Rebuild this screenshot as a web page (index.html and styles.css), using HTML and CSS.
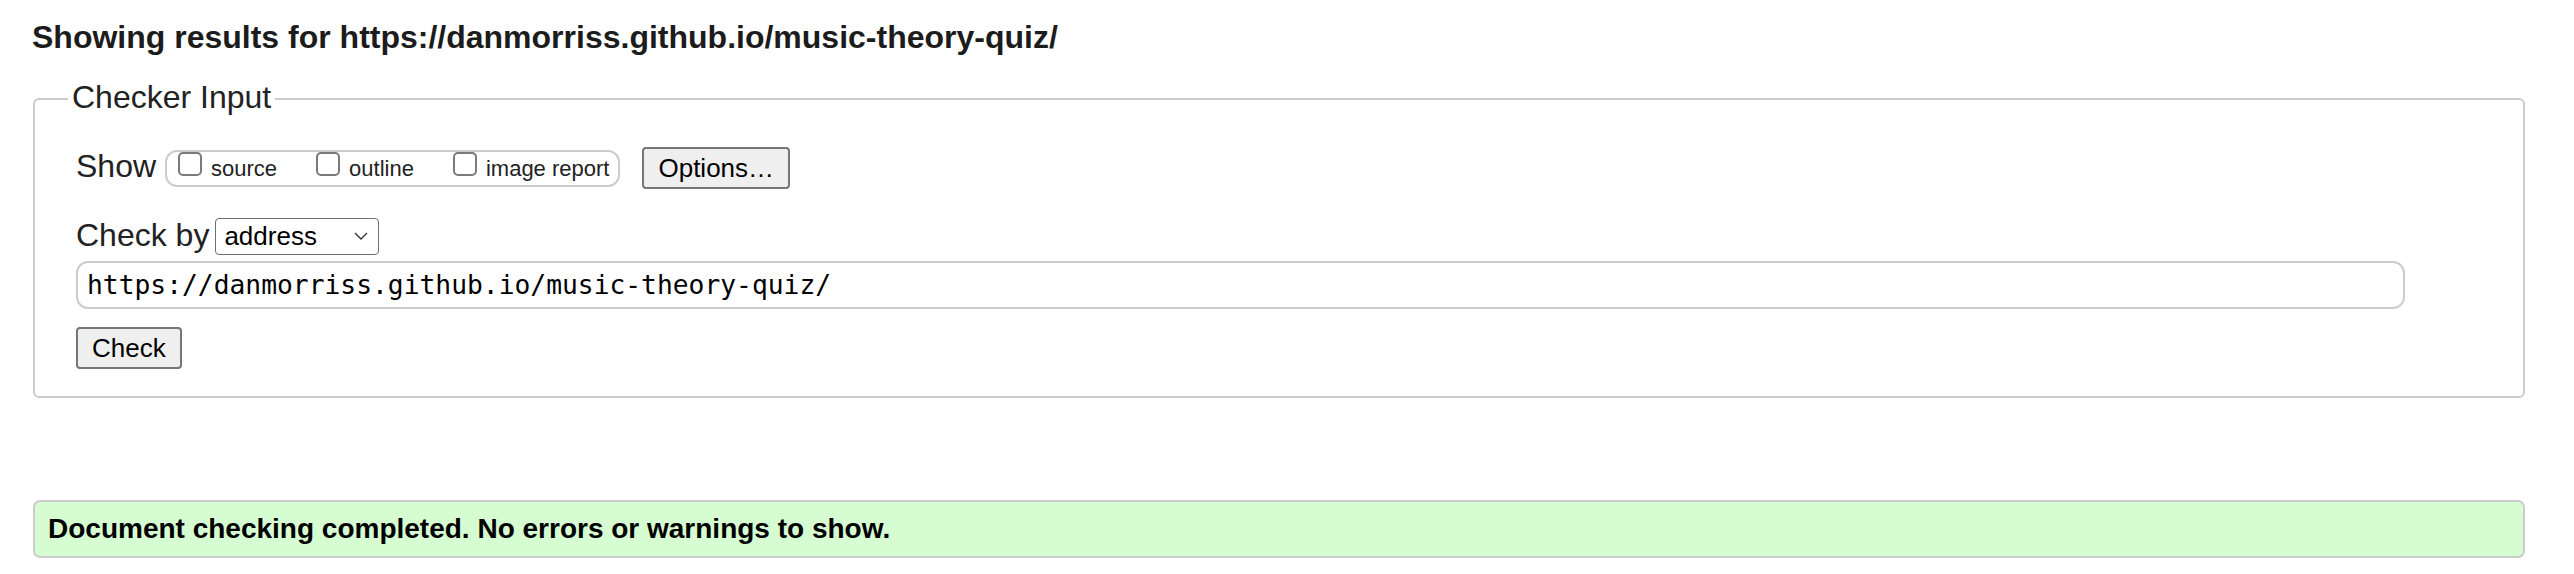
FILE: index.html
```html
<!DOCTYPE html>
<html lang="en">
<head>
<meta charset="utf-8">
<title>Showing results for https://danmorriss.github.io/music-theory-quiz/</title>
<link rel="stylesheet" href="styles.css">
</head>
<body>
<div class="page">
  <h2 class="title">Showing results for https://danmorriss.github.io/music-theory-quiz/</h2>
  <fieldset class="checker">
    <legend class="checker-legend">Checker Input</legend>
    <div class="checker-body">
      <div class="row row-show">
        <span class="row-label">Show</span>
        <span class="show-options">
          <label class="opt"><input type="checkbox" class="cb"><span class="opt-text">source</span></label>
          <label class="opt"><input type="checkbox" class="cb"><span class="opt-text">outline</span></label>
          <label class="opt"><input type="checkbox" class="cb"><span class="opt-text">image report</span></label>
        </span>
        <button type="button" class="btn btn-options">Options…</button>
      </div>
      <div class="row row-checkby">
        <span class="row-label">Check by</span>
        <span class="select-wrap">
          <select class="select"><option>address</option></select>
          <svg class="chevron" width="14" height="8" viewBox="0 0 14 8" aria-hidden="true"><polyline points="1,1 7,7 13,1" fill="none" stroke="#333" stroke-width="1.4"/></svg>
        </span>
      </div>
      <input class="url" type="text" value="https://danmorriss.github.io/music-theory-quiz/">
      <button type="button" class="btn btn-check">Check</button>
    </div>
  </fieldset>
  <div class="result">Document checking completed. No errors or warnings to show.</div>
</div>
</body>
</html>
```
FILE: styles.css
```css
html, body {
  margin: 0;
  padding: 0;
  background: #fff;
}

.page {
  padding: 0 49px 0 32px;
  font-family: "Liberation Sans", Arial, sans-serif;
  color: #222;
}

.title {
  margin: 17px 0 0 0;
  font-size: 32px;
  line-height: 40px;
  font-weight: bold;
  color: #1c1c1c;
}

.checker {
  margin: 22px 0 0 1px;
  padding: 29px 33px 27px 33px;
  border: 2px solid #cccccc;
  border-radius: 6px;
  min-width: 0;
}

.checker-legend {
  padding: 0 4px 3px 4px;
  font-size: 32px;
  line-height: 36px;
  color: #222;
}

.checker-body {
  padding-left: 8px;
}

.row {
  display: flex;
  align-items: center;
}

.row-show {
  gap: 9px;
}

.row-checkby {
  margin-top: 29px;
  gap: 6px;
}

.row-label {
  font-size: 32px;
  line-height: 32px;
  padding-bottom: 4px;
  color: #222;
}

.show-options {
  display: inline-flex;
  align-items: flex-start;
  box-sizing: border-box;
  height: 37px;
  border: 2px solid #cccccc;
  border-radius: 12px;
  padding: 0 9px 0 11px;
}

.opt {
  display: flex;
  align-items: flex-start;
}

.opt + .opt {
  margin-left: 39px;
}

.cb {
  appearance: none;
  -webkit-appearance: none;
  box-sizing: border-box;
  width: 24px;
  height: 24px;
  margin: 0 9px 0 0;
  border: 2px solid #7a7a7a;
  border-radius: 5px;
  background: #fff;
}

.opt-text {
  font-size: 22px;
  line-height: 32px;
  padding-top: 1px;
  color: #222;
}

.btn {
  box-sizing: border-box;
  height: 42px;
  padding: 4px 14px;
  border: 2px solid #767676;
  border-radius: 4px;
  background: #efefef;
  font-family: "Liberation Sans", Arial, sans-serif;
  font-size: 26px;
  line-height: 30px;
  color: #000;
}

.btn-options {
  margin-left: 13px;
}

.select-wrap {
  position: relative;
  display: inline-block;
  height: 37px;
}

.select {
  appearance: none;
  -webkit-appearance: none;
  box-sizing: border-box;
  width: 164px;
  height: 37px;
  margin: 0;
  padding: 0 8px;
  border: 1.5px solid #6f6f6f;
  border-radius: 4px;
  background: #fff;
  font-family: "Liberation Sans", Arial, sans-serif;
  font-size: 26px;
  line-height: 33px;
  color: #000;
}

.chevron {
  position: absolute;
  right: 11px;
  top: 14px;
  pointer-events: none;
}

.url {
  display: block;
  box-sizing: border-box;
  width: 2329px;
  height: 48px;
  margin: 6px 0 0 0;
  padding: 0 9px;
  border: 2px solid #cccccc;
  border-radius: 12px;
  font-family: "DejaVu Sans Mono", monospace;
  font-size: 26.3px;
  color: #000;
  background: #fff;
}

.btn-check {
  display: block;
  margin-top: 18px;
}

.result {
  margin: 102px 0 0 1px;
  height: 58px;
  box-sizing: border-box;
  padding: 0 13px;
  border: 2px solid #cccccc;
  border-radius: 7px;
  background: #d6fcd1;
  font-size: 28px;
  font-weight: bold;
  line-height: 54px;
  color: #000;
}
```
